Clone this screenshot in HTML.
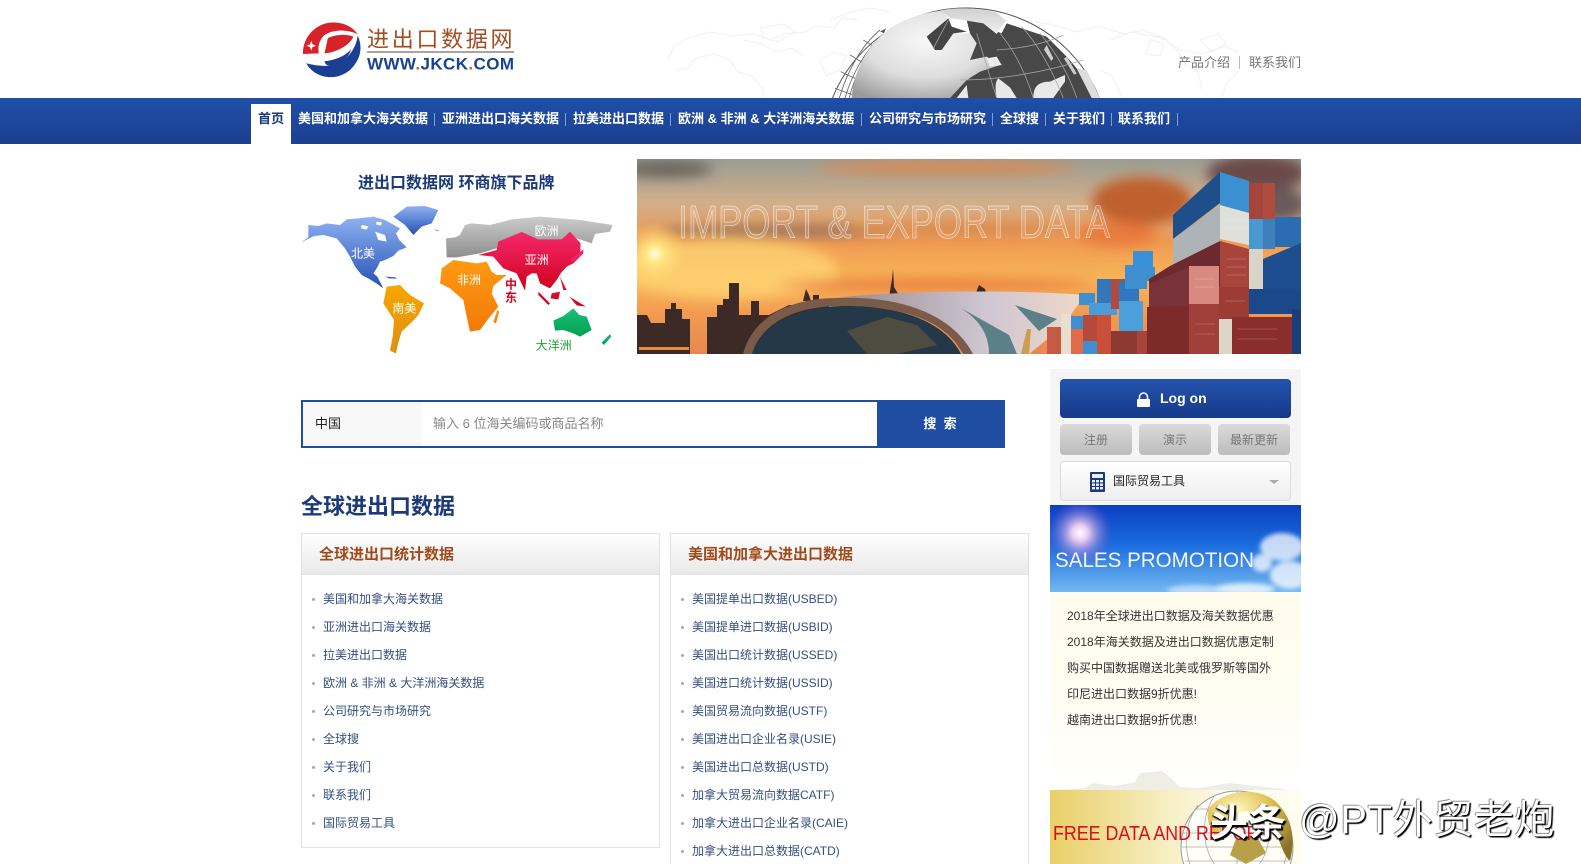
<!DOCTYPE html>
<html lang="zh-CN">
<head>
<meta charset="utf-8">
<title>进出口数据网</title>
<style>
*{box-sizing:border-box;margin:0;padding:0}
html,body{width:1581px;height:864px;overflow:hidden;background:#fff}
body{position:relative;font-family:"Liberation Sans","Noto Sans CJK SC",sans-serif;font-size:12px;color:#333}
.a{position:absolute;white-space:nowrap}
svg{position:absolute;display:block;overflow:hidden}
#nav{left:0;top:98px;width:1581px;height:46px;background:linear-gradient(#1f4fa9,#1c3f8f)}
#tab{left:251px;top:104px;width:40px;height:40px;background:#fff;color:#1b3a7a;font-weight:bold;font-size:13px;line-height:30px;text-align:center}
.n{position:absolute;top:110px;height:18px;line-height:18px;font-size:13px;font-weight:bold;color:#fff;white-space:nowrap}
.s{position:absolute;top:113px;width:1px;height:13px;background:#7f9fd8}
.box{position:absolute;border:1px solid #e2e2e2;background:#fff}
.hd{height:41px;background:linear-gradient(#fff,#e9e9e9);border-bottom:1px solid #e4e4e4;font-size:15px;font-weight:bold;color:#a04a1a;line-height:41px;padding-left:17px}
.li{position:absolute;height:18px;line-height:18px;font-size:12px;color:#34507f;white-space:nowrap;margin-top:1px}
.li:before{content:"";position:absolute;left:-11px;top:8px;width:3px;height:3px;border-radius:50%;background:#aaa}
.gb{position:absolute;top:424px;height:31px;border-radius:4px;background:linear-gradient(#dadada,#bcbcbc);color:#777;text-align:center;line-height:33px;font-size:12px}
.pr{position:absolute;left:1067px;height:18px;line-height:18px;font-size:12px;color:#333;white-space:nowrap;margin-top:1px}
</style>
</head>
<body>

<!-- faint world map + globe in header -->
<svg style="left:660px;top:0" width="650" height="98" viewBox="660 0 650 98">
<g fill="none" stroke="#efefef" stroke-width="1">
<path d="M668 60l6-14 14-8 22-6 24 4 20-2 16 6 14-6 22-2 10-6 18 2 8-10 16 2M676 70l12-2 8-10 18-4 16 6 8 12 14 4 10 12 4 14M744 40l18 4 14 8 16-4 10 8M830 20l20-8 22-4 18 4M1000 26l20-6 30 4 26 8 22-6 26 8 18-4 22 8 16 16 6 14M1110 40l22-8 30 6 18 12 24 4 20-8 14 6M1180 60l18 12 4 18M1240 70l-14 14-4 14M1100 70l12 6 6 12 4 10"/>
<path d="M820 60l14-8 12 4-6 14-14 6zM760 28l24-4 10 8-16 10-14-4zM1150 40l14 4-4 12-14-2zM1200 40l18-6 8 10-14 8z"/>
</g>
</svg>
<svg style="left:820px;top:0" width="300" height="98" viewBox="0 0 900 294">
<defs>
<radialGradient id="sil" cx="0.5" cy="0.35" r="0.75"><stop offset="0" stop-color="#f8f8f8"/><stop offset=".55" stop-color="#dedede"/><stop offset="1" stop-color="#9a9a9a"/></radialGradient>
<linearGradient id="topl" x1="0" y1="0" x2="0" y2="1"><stop offset="0" stop-color="#d0d0d0"/><stop offset="1" stop-color="#f0f0f0"/></linearGradient>
</defs>
<circle cx="438" cy="456" r="432" fill="#fff" stroke="#555" stroke-width="3"/>
<g fill="none" stroke="#666" stroke-width="2.5">
<path d="M58 294C80 220 120 140 180 90M75 294C95 225 135 150 192 100M88 294C100 235 140 160 195 110M45 265L120 292M62 215L115 240M90 165L140 195M130 120L170 145"/>
</g>
<path d="M95 294C100 220 135 150 190 100C240 60 300 40 365 32L385 55L320 110L345 150L365 150L400 100L450 100L470 130L450 180L500 170L540 195L480 215L440 240L390 294Z" fill="url(#sil)"/>
<path d="M180 95l18-10-6 14z" fill="#555"/>
<path d="M385 55L320 110L345 150L365 150L400 100L440 95L395 80Z" fill="#444"/>
<path d="M420 40L470 50L520 90L545 100L560 70L680 110L740 170L800 240L835 294L390 294L440 240L480 215L540 195L500 170L450 180L470 130L450 100L440 60Z" fill="#484848"/>
<path d="M360 32C400 22 470 22 530 38L558 62L530 102L490 70L440 62L392 55Z" fill="url(#topl)"/>
<path d="M530 294C525 265 525 245 535 235L570 262L590 294ZM640 294C640 265 650 245 690 245L735 225L735 245L700 294ZM410 294L440 255L445 294Z" fill="#e8e8e8"/>
<path d="M800 210L840 294H815L770 205Z" fill="#ddd"/>
<path d="M500 175L530 170L545 195L510 200Z" fill="#eee"/>
<path d="M680 135l20 40 -6 8-22-34zM740 170l30 50-8 4-30-48z" fill="#cfcfcf"/>
<g fill="none" stroke="#a8a8a8" stroke-width="2.2">
<path d="M420 240C540 240 680 215 790 180M530 150C620 145 690 125 730 105M470 100L530 294M540 100C590 160 620 230 640 294M605 80C660 140 700 220 730 294M660 100C710 160 750 230 770 294M385 60L340 145"/>
</g>
</svg>

<!-- logo -->
<svg style="left:303px;top:22px" width="58" height="58" viewBox="160 65 175 172">
<path d="M170 188C200 245 300 250 330 165C340 130 325 105 325 105C320 150 280 198 230 196C205 196 185 192 170 188Z" fill="#1b3f92"/>
<path d="M160 160C158 105 205 62 255 65C290 67 310 80 325 100C290 85 250 85 222 105C205 125 205 145 208 158Z" fill="#d8222a"/>
<path d="M235 112C260 100 295 100 312 108C300 135 260 155 225 158Z" fill="#d8222a"/>
<path d="M225 182C260 178 290 165 305 145C300 170 270 198 240 196C232 195 226 190 225 182Z" fill="#1b3f92"/>
<path d="M185 120l4 11 11 4-11 4-4 11-4-11-11-4 11-4z" fill="#fff"/>
</svg>
<div class="a" style="left:367px;top:23px;font-size:22px;line-height:30px;letter-spacing:2.7px;color:#a34c22;font-family:'Noto Sans CJK SC',sans-serif">进出口数据网</div>
<div class="a" style="left:367px;top:51px;width:147px;height:2px;background:#a5a5a5"></div>
<svg style="left:365px;top:54px" width="155" height="20"><text x="2" y="15.5" font-family="Liberation Sans" font-size="17" font-weight="bold" fill="#17438f" textLength="147" lengthAdjust="spacing">WWW<tspan fill="#d8622a">.</tspan>JKCK<tspan fill="#d8622a">.</tspan>COM</text></svg>

<div class="a" style="left:1178px;top:53px;font-size:13px;line-height:19px;color:#777">产品介绍</div>
<div class="a" style="left:1239px;top:56px;width:1px;height:13px;background:#bbb"></div>
<div class="a" style="left:1249px;top:53px;font-size:13px;line-height:19px;color:#777">联系我们</div>

<!-- nav -->
<div class="a" id="nav"></div>
<div class="a" id="tab">首页</div>
<span class="n" style="left:298px">美国和加拿大海关数据</span><i class="s" style="left:434px"></i>
<span class="n" style="left:442px">亚洲进出口海关数据</span><i class="s" style="left:565px"></i>
<span class="n" style="left:573px">拉美进出口数据</span><i class="s" style="left:670px"></i>
<span class="n" style="left:678px">欧洲 &amp; 非洲 &amp; 大洋洲海关数据</span><i class="s" style="left:861px"></i>
<span class="n" style="left:869px">公司研究与市场研究</span><i class="s" style="left:992px"></i>
<span class="n" style="left:1000px">全球搜</span><i class="s" style="left:1045px"></i>
<span class="n" style="left:1053px">关于我们</span><i class="s" style="left:1111px"></i>
<span class="n" style="left:1118px">联系我们</span><i class="s" style="left:1177px"></i>

<!-- map -->
<div class="a" style="left:358px;top:172px;font-size:16px;line-height:24px;font-weight:bold;color:#1b3a7a">进出口数据网 环商旗下品牌</div>
<svg style="left:290px;top:160px" width="340" height="200" viewBox="0 0 1020 600">
<defs>
<linearGradient id="gb" x1="0" y1="0" x2="0" y2="1"><stop offset="0" stop-color="#8fb2f2"/><stop offset="1" stop-color="#2452b4"/></linearGradient>
<linearGradient id="go" x1="0" y1="0" x2="0" y2="1"><stop offset="0" stop-color="#f7a600"/><stop offset="1" stop-color="#dd8f10"/></linearGradient>
<linearGradient id="gf" x1="0" y1="0" x2="0" y2="1"><stop offset="0" stop-color="#ff9a10"/><stop offset="1" stop-color="#f27a08"/></linearGradient>
<linearGradient id="gg" x1="0" y1="0" x2="0" y2="1"><stop offset="0" stop-color="#cccccc"/><stop offset="1" stop-color="#8e8e8e"/></linearGradient>
<linearGradient id="gr" x1="0" y1="0" x2="0" y2="1"><stop offset="0" stop-color="#f5286e"/><stop offset="1" stop-color="#d0021b"/></linearGradient>
<linearGradient id="gn" x1="0" y1="0" x2="0" y2="1"><stop offset="0" stop-color="#1cc07a"/><stop offset="1" stop-color="#00a050"/></linearGradient>
</defs>
<path fill="url(#gb)" d="M32 248L55 232L55 195L85 198L110 190L150 195L170 178L205 175L250 170L285 180L330 205L318 220L328 240L350 262L325 272L310 288L285 300L270 305L262 322L250 340L262 350L280 385L262 372L240 358L215 345L195 320L180 290L165 265L140 235L100 225L72 228Z"/>
<path fill="url(#gb)" d="M310 170L350 140L405 138L445 150L425 190L395 200L370 225L345 195Z"/>
<path fill="#fff" d="M255 215L285 225L290 245L265 240ZM215 195l20 4-6 10-16-4zM260 185l16 2-4 10-14-4z"/>
<path fill="url(#gb)" d="M285 350l30 2 6 4-24-1zM430 208l20 2-8 4z"/>
<path fill="url(#go)" d="M290 380L330 375L360 405L402 430L385 465L370 482L335 515L325 548L318 580L300 572L308 530L312 480L280 430Z"/>
<path fill="url(#gf)" d="M490 300L560 310L590 305L605 335L620 345L650 345L610 378L605 400L625 440L600 470L570 510L540 515L530 470L520 420L480 385L450 370L455 325Z"/>
<path fill="url(#gf)" d="M622 450L628 455L618 490L610 486Z"/>
<path fill="url(#gg)" d="M470 292L468 235L495 232L510 225L525 195L545 190L600 195L640 185L665 178L750 170L870 180L968 195L960 215L915 222L905 250L860 235L820 245L720 245L650 245L620 265L570 280L500 292Z"/>
<path fill="url(#gr)" d="M625 245L695 216L745 238L815 238L840 215L872 250L870 290L850 310L830 320L812 340L800 360L780 385L750 370L740 340L725 340L710 350L705 392L680 340L640 325L610 290L565 285L620 270Z"/>
<path fill="url(#gr)" d="M745 395L780 430L775 435L745 405ZM785 400L810 395L805 418L782 415ZM838 410L888 440L860 436ZM840 300L880 268L880 280L850 310ZM810 350L830 390L820 390Z"/>
<path fill="url(#gn)" d="M790 482L820 468L850 445L868 465L890 470L905 510L870 530L850 520L820 510L795 512Z"/>
<path fill="url(#gn)" d="M935 548L960 522L964 530L942 555Z"/>
<g font-family="Liberation Sans,Noto Sans CJK SC,sans-serif" font-size="36" text-anchor="middle" fill="#fff">
<text x="219" y="293">北美</text><text x="770" y="225">欧洲</text><text x="740" y="312">亚洲</text><text x="537" y="372">非洲</text><text x="343" y="458">南美</text>
<text x="663" y="385" fill="#d0021b" font-weight="bold">中</text><text x="663" y="424" fill="#d0021b" font-weight="bold">东</text>
<text x="791" y="568" fill="#1fa03a">大洋洲</text>
</g>
</svg>

<!-- banner -->
<svg style="left:637px;top:159px" width="664" height="195" viewBox="0 0 664 195">
<defs>
<linearGradient id="sky" x1="0" y1="0" x2="0" y2="1"><stop offset="0" stop-color="#9a9d94"/><stop offset=".22" stop-color="#d0ae8a"/><stop offset=".42" stop-color="#ef9a52"/><stop offset=".62" stop-color="#f9b557"/><stop offset=".8" stop-color="#f29a50"/><stop offset="1" stop-color="#e88850"/></linearGradient>
<radialGradient id="sun"><stop offset="0" stop-color="#fffde0"/><stop offset=".25" stop-color="#ffe98a"/><stop offset="1" stop-color="#ffd060" stop-opacity="0"/></radialGradient>
<linearGradient id="roof" x1="0" y1="0" x2="1" y2="0"><stop offset="0" stop-color="#9a8a8e"/><stop offset=".6" stop-color="#cfc6d2"/><stop offset="1" stop-color="#efd9c8"/></linearGradient>
<filter id="b6"><feGaussianBlur stdDeviation="6"/></filter>
<filter id="b3"><feGaussianBlur stdDeviation="3"/></filter>
</defs>
<rect width="664" height="195" fill="url(#sky)"/>
<g filter="url(#b6)">
<ellipse cx="30" cy="10" rx="46" ry="9" fill="#6b675f"/>
<ellipse cx="310" cy="8" rx="130" ry="7" fill="#d88a55"/>
<ellipse cx="505" cy="42" rx="50" ry="24" fill="#c0602e"/>
<ellipse cx="620" cy="14" rx="50" ry="18" fill="#6a4a48"/>
<ellipse cx="640" cy="45" rx="30" ry="18" fill="#6a5a5c"/>
<ellipse cx="150" cy="72" rx="130" ry="6" fill="#9a7258"/>
<ellipse cx="330" cy="70" rx="120" ry="6" fill="#d8884c"/>
<ellipse cx="480" cy="75" rx="40" ry="12" fill="#e87a3c"/>
<ellipse cx="90" cy="110" rx="110" ry="30" fill="#ffd878" opacity=".7"/>
<ellipse cx="300" cy="125" rx="160" ry="5" fill="#e5763c"/>
</g>
<circle cx="18" cy="95" r="32" fill="url(#sun)"/>
<text x="41" y="79" font-family="Liberation Sans" font-size="46" fill="#fff" fill-opacity=".12" stroke="#fff" stroke-opacity=".8" stroke-width=".6" textLength="432" lengthAdjust="spacingAndGlyphs">IMPORT &amp; EXPORT DATA</text>
<!-- skyline -->
<g fill="#3d2a26">
<path d="M0 156h10l4 8h14v-14h6v-6h5v6h6v10h8v35H0zM70 158h10v-12h6v-6h6v-16h10v32h12v-14h8v14h10l20-10h40v50H70z"/>
<path d="M166 142l3-12 3 6 2 6zM176 142v-6h6v6zM252 138l3-18 1-10 1 18 6 10zM275 138v-4h4v4zM338 136l4-10 6 4 2 6z"/>
<rect x="2" y="188" width="50" height="3" fill="#e88a3a"/>
</g>
<!-- dome -->
<path d="M200 139C250 132 370 130 448 136L425 168L392 195H325C310 150 260 139 200 139Z" fill="url(#roof)"/>
<path d="M326 195C308 160 262 146 200 147C150 148 122 170 115 195H106C115 160 150 138 205 139C272 137 318 160 336 195Z" fill="#7a5a48"/>
<path d="M115 195C125 165 160 148 205 147C258 146 306 160 324 195Z" fill="#24384a"/>
<path d="M210 172l40-14 30 8 20 20-40 9h-30zM140 190l40-20" fill="#6a5a3c" opacity=".6"/>
<path d="M322 148L372 176L380 195H352C352 175 342 160 322 148ZM378 146L420 160L402 172Z" fill="#5c8088"/>
<path d="M384 195L390 170L394 170L392 195Z" fill="#c8a050"/>
<!-- mid containers -->
<g transform="translate(12 0)">
<rect x="398" y="168" width="14" height="27" fill="#c65a42"/><rect x="412" y="155" width="10" height="40" fill="#e8dfd0"/>
<rect x="422" y="170" width="12" height="25" fill="#e06a4a"/><rect x="422" y="157" width="12" height="13" fill="#3f8fd0"/>
<rect x="434" y="182" width="14" height="13" fill="#3f8fd0"/><rect x="434" y="156" width="14" height="26" fill="#b34a3c"/>
<rect x="448" y="156" width="14" height="39" fill="#c8503a"/><rect x="430" y="134" width="16" height="12" fill="#3f8fd0"/>
<rect x="448" y="120" width="16" height="36" fill="#3378bc"/><rect x="440" y="144" width="28" height="12" fill="#4b9bd8"/>
<rect x="462" y="120" width="14" height="30" fill="#b04a3c"/><rect x="470" y="122" width="20" height="20" fill="#2f78c0"/>
<rect x="470" y="142" width="24" height="30" fill="#4ba0dc"/><rect x="476" y="106" width="22" height="24" fill="#3f8fd0"/>
<rect x="490" y="108" width="16" height="14" fill="#3f8fd0"/><rect x="484" y="92" width="20" height="16" fill="#3a90d8"/>
<rect x="462" y="172" width="32" height="23" fill="#8c3a32"/><rect x="488" y="172" width="18" height="23" fill="#a84438"/>
</g>
<!-- big stack -->
<path d="M536 56L583 13V44L536 80Z" fill="#1f4f8a"/>
<path d="M583 13L612 22V54L583 48Z" fill="#3b90d2"/>
<path d="M536 80L583 46V88L536 107Z" fill="#aeb3b8"/>
<path d="M583 46L612 54V86L583 80Z" fill="#dfe0da"/>
<path d="M533 107L583 82V130L512 150V120Z" fill="#6c2a2e"/>
<path d="M583 82L612 90V150L583 148Z" fill="#a8443c"/>
<path d="M512 125L552 108V172L512 188Z" fill="#78323a"/>
<rect x="552" y="107" width="30" height="50" fill="#d88a80"/>
<path d="M510 148L552 147V195H510Z" fill="#7c2a2a"/>
<rect x="552" y="145" width="30" height="50" fill="#a04038"/>
<rect x="582" y="128" width="30" height="32" fill="#9c3c34"/>
<rect x="582" y="160" width="14" height="35" fill="#dcd6c8"/>
<rect x="612" y="24" width="14" height="36" fill="#a4443a"/><rect x="612" y="60" width="14" height="30" fill="#4b98d0"/>
<rect x="626" y="24" width="12" height="36" fill="#b04c3e"/><rect x="626" y="60" width="12" height="30" fill="#3d80bc"/>
<rect x="638" y="58" width="26" height="30" fill="#2c6cb0"/>
<rect x="612" y="90" width="14" height="50" fill="#d8d4c8"/>
<path d="M626 100L664 84V130L626 140Z" fill="#1e4e90"/>
<rect x="612" y="130" width="52" height="25" fill="#1a4888"/>
<rect x="595" y="158" width="60" height="37" fill="#8a2e2c"/>
<rect x="655" y="150" width="9" height="45" fill="#1a3e78"/>
<g fill="none" stroke="#fff" stroke-opacity=".18"><path d="M590 100h20M590 108h20M590 116h20M558 120h20M558 128h20M558 165h20M558 175h20M588 142h20M600 170h40M600 180h40M586 60h24M586 68h24"/></g>
</svg>

<!-- search -->
<div class="a" style="left:301px;top:400px;width:704px;height:48px;border:2px solid #1f4da3;background:#fff"></div>
<div class="a" style="left:303px;top:402px;width:119px;height:44px;background:#f8f8f8;font-size:13px;line-height:44px;padding-left:12px;color:#222">中国</div>
<div class="a" style="left:433px;top:402px;height:44px;line-height:44px;font-size:13px;color:#888">输入 6 位海关编码或商品名称</div>
<div class="a" style="left:877px;top:400px;width:126px;height:48px;background:#1f4da3;color:#fff;font-size:13px;font-weight:bold;line-height:48px;text-align:center">搜&nbsp;&nbsp;索</div>
<div class="a" style="left:1003px;top:400px;width:2px;height:48px;background:#1f4da3"></div>

<div class="a" style="left:301px;top:491px;font-size:22px;line-height:32px;font-weight:bold;color:#1b3a7a">全球进出口数据</div>

<!-- left box -->
<div class="box" style="left:301px;top:533px;width:359px;height:315px"><div class="hd">全球进出口统计数据</div></div>
<div class="li" style="left:323px;top:589px">美国和加拿大海关数据</div>
<div class="li" style="left:323px;top:617px">亚洲进出口海关数据</div>
<div class="li" style="left:323px;top:645px">拉美进出口数据</div>
<div class="li" style="left:323px;top:673px">欧洲 &amp; 非洲 &amp; 大洋洲海关数据</div>
<div class="li" style="left:323px;top:701px">公司研究与市场研究</div>
<div class="li" style="left:323px;top:729px">全球搜</div>
<div class="li" style="left:323px;top:757px">关于我们</div>
<div class="li" style="left:323px;top:785px">联系我们</div>
<div class="li" style="left:323px;top:813px">国际贸易工具</div>

<!-- right box -->
<div class="box" style="left:670px;top:533px;width:359px;height:340px"><div class="hd">美国和加拿大进出口数据</div></div>
<div class="li" style="left:692px;top:589px">美国提单出口数据(USBED)</div>
<div class="li" style="left:692px;top:617px">美国提单进口数据(USBID)</div>
<div class="li" style="left:692px;top:645px">美国出口统计数据(USSED)</div>
<div class="li" style="left:692px;top:673px">美国进口统计数据(USSID)</div>
<div class="li" style="left:692px;top:701px">美国贸易流向数据(USTF)</div>
<div class="li" style="left:692px;top:729px">美国进出口企业名录(USIE)</div>
<div class="li" style="left:692px;top:757px">美国进出口总数据(USTD)</div>
<div class="li" style="left:692px;top:785px">加拿大贸易流向数据CATF)</div>
<div class="li" style="left:692px;top:813px">加拿大进出口企业名录(CAIE)</div>
<div class="li" style="left:692px;top:841px">加拿大进出口总数据(CATD)</div>

<!-- sidebar -->
<div class="a" style="left:1050px;top:369px;width:251px;height:136px;background:#f5f5f5"></div>
<div class="a" style="left:1060px;top:379px;width:231px;height:39px;border-radius:4px;background:linear-gradient(#2353ad,#173a8a);color:#fff;font-size:14px;font-weight:bold;line-height:38px;padding-left:100px">Log on</div>
<svg style="left:1136px;top:391px" width="15" height="17" viewBox="0 0 15 17"><path d="M3.5 8V6a4 4 0 0 1 8 0V8" fill="none" stroke="#fff" stroke-width="1.6"/><rect x="1" y="8" width="13" height="8" rx="1" fill="#fff"/></svg>
<div class="gb" style="left:1060px;width:72px">注册</div>
<div class="gb" style="left:1139px;width:72px">演示</div>
<div class="gb" style="left:1218px;width:72px">最新更新</div>
<div class="a" style="left:1060px;top:461px;width:231px;height:40px;border:1px solid #dcdcdc;border-radius:4px;background:linear-gradient(#fff,#eee)"></div>
<svg style="left:1090px;top:472px" width="15" height="20" viewBox="0 0 15 20"><rect width="15" height="20" rx="1" fill="#1b3a7a"/><rect x="2" y="2" width="11" height="4" fill="#e8ecf5"/><g fill="#e8ecf5"><rect x="2" y="8" width="3" height="2.4"/><rect x="6" y="8" width="3" height="2.4"/><rect x="10" y="8" width="3" height="2.4"/><rect x="2" y="11.5" width="3" height="2.4"/><rect x="6" y="11.5" width="3" height="2.4"/><rect x="10" y="11.5" width="3" height="2.4"/><rect x="2" y="15" width="3" height="2.4"/><rect x="6" y="15" width="3" height="2.4"/><rect x="10" y="15" width="3" height="2.4"/></g></svg>
<div class="a" style="left:1113px;top:472px;font-size:12px;line-height:19px;color:#222">国际贸易工具</div>
<div class="a" style="left:1269px;top:480px;width:0;height:0;border-left:5px solid transparent;border-right:5px solid transparent;border-top:4px solid #aaa"></div>

<!-- sales -->
<svg style="left:1050px;top:505px" width="251" height="87" viewBox="0 0 251 87">
<defs>
<linearGradient id="bl" x1="0" y1="0" x2="0" y2="1"><stop offset="0" stop-color="#0b3fc0"/><stop offset=".45" stop-color="#1a6bdc"/><stop offset="1" stop-color="#74b8f0"/></linearGradient>
<radialGradient id="gl"><stop offset="0" stop-color="#fff"/><stop offset=".25" stop-color="#e4c8ef"/><stop offset="1" stop-color="#5a46c8" stop-opacity="0"/></radialGradient>
<filter id="c2"><feGaussianBlur stdDeviation="2.5"/></filter>
</defs>
<rect width="251" height="87" fill="url(#bl)"/>
<circle cx="30" cy="28" r="34" fill="url(#gl)"/>
<g fill="#fff" filter="url(#c2)" opacity=".75">
<ellipse cx="232" cy="42" rx="22" ry="14"/><ellipse cx="212" cy="58" rx="10" ry="9"/><ellipse cx="240" cy="70" rx="20" ry="14"/>
<ellipse cx="145" cy="85" rx="28" ry="5" opacity=".7"/><ellipse cx="195" cy="84" rx="30" ry="6"/>
</g>
<text x="5" y="62" font-family="Liberation Sans" font-size="21" fill="#f2f7ff" textLength="199" lengthAdjust="spacingAndGlyphs">SALES PROMOTION</text>
</svg>

<!-- promotions -->
<div class="a" style="left:1050px;top:592px;width:251px;height:198px;background:linear-gradient(#fffcee,#fffdf2 60%,#fff)"></div>
<div class="pr" style="top:606px">2018年全球进出口数据及海关数据优惠</div>
<div class="pr" style="top:632px">2018年海关数据及进出口数据优惠定制</div>
<div class="pr" style="top:658px">购买中国数据赠送北美或俄罗斯等国外</div>
<div class="pr" style="top:684px">印尼进出口数据9折优惠!</div>
<div class="pr" style="top:710px">越南进出口数据9折优惠!</div>

<!-- free data -->
<svg style="left:1050px;top:765px" width="251" height="99" viewBox="0 0 251 99">
<defs>
<linearGradient id="yl" x1="0" y1="0" x2="1" y2="0"><stop offset="0" stop-color="#e8cf68"/><stop offset=".45" stop-color="#f7edc0"/><stop offset=".7" stop-color="#fdfbe9"/><stop offset="1" stop-color="#fffdf0"/></linearGradient>
<radialGradient id="gd" cx=".35" cy=".25" r=".8"><stop offset="0" stop-color="#fff6c0"/><stop offset=".5" stop-color="#e0c050"/><stop offset="1" stop-color="#8a7228"/></radialGradient>
</defs>
<path d="M5 25l30-2 8-5 22 3 20-4 5-9 22-2 10 8 8 8 20 1 30-5 25 3 20 2 20 3H5z" fill="#eeede6"/>
<rect y="25" width="251" height="74" fill="url(#yl)"/>
<circle cx="187" cy="82" r="56" fill="#fffff6" stroke="#999" stroke-width="1"/>
<g fill="none" stroke="#aaa" stroke-width=".8">
<path d="M131 82h112M133 68h108M135 96h104M145 44h84M187 26v74M165 30c-14 20-14 50 0 70M209 30c14 20 14 50 0 70M148 40c-14 20-14 40-8 60M226 40c14 20 14 40 8 60"/>
</g>
<path d="M158 44C172 26 205 20 225 36C242 52 246 72 240 96C232 90 226 62 218 52C208 46 190 44 184 50C180 62 172 76 166 72C160 64 156 54 158 44Z" fill="url(#gd)"/>
<path d="M186 74L206 70L216 88L196 99L180 90Z" fill="#b8a048"/>
<text x="3" y="75" font-family="Liberation Sans" font-size="20" fill="#e00b1c" textLength="217" lengthAdjust="spacingAndGlyphs">FREE DATA AND REPORT</text>
</svg>

<!-- watermark -->
<div class="a" style="left:1210px;top:795px;font-size:38px;line-height:50px;font-weight:bold;color:#fff;text-shadow:2px 2px 1px #000,1px 2px 1px #000,-1px 1px 1px #222;font-family:'Noto Sans CJK SC',sans-serif">头条</div>
<div class="a" style="left:1299px;top:794px;font-size:40px;line-height:52px;letter-spacing:.6px;color:#fff;text-shadow:1.5px 1.5px 1px #000,-.5px -.5px 1px #333">@PT外贸老炮</div>

</body>
</html>
